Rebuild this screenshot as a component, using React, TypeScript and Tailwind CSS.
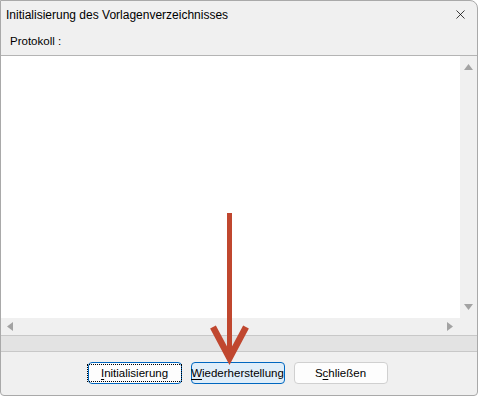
import { X } from "lucide-react";

const font = { fontFamily: '"Segoe UI", "Liberation Sans", Arial, sans-serif' };

function Btn({ u, rest, pre = "", focus = false, hot = false }: { u: string; rest: string; pre?: string; focus?: boolean; hot?: boolean }) {
  return (
    <button
      className={
        "h-[22px] w-[94px] rounded-[4px] border text-[11.5px] text-black flex items-center justify-center " +
        (hot ? "border-[#0067c0] bg-[#e0eef9]" : focus ? "border-[#0067c0] bg-[#fdfdfd]" : "border-[#d0d0d0] bg-[#fdfdfd]")
      }
    >
      <span className={focus ? "outline outline-1 outline-dotted outline-black px-[13px] leading-[16px]" : "leading-[16px]"}>
        {pre}
        <span className="underline underline-offset-2">{u}</span>
        {rest}
      </span>
    </button>
  );
}

export default function App() {
  return (
    <div className="w-[479px] h-[397px] bg-white relative" style={font}>
      <div className="w-[478px] h-[396px] bg-[#f0f0f0] border border-[#a9a9a9] rounded-tr-[8px] rounded-b-[4px] flex flex-col overflow-hidden">
        {/* Title */}
        <div className="h-[27px] flex items-center pl-[5px] pr-[9px] justify-between">
          <span className="text-[12px] text-black">Initialisierung des Vorlagenverzeichnisses</span>
          <X className="w-[15px] h-[15px] text-black" strokeWidth={1.2} />
        </div>
        {/* Label */}
        <div className="h-[27px] flex items-center pl-[9px] text-[11.5px] text-black">Protokoll :</div>
        {/* Log box */}
        <div className="flex-1 flex flex-col bg-white border-t border-[#b4b4b4]">
          <div className="flex-1 flex">
            <div className="flex-1 bg-white" />
            <div className="w-[17px] bg-[#f0f0f0] flex flex-col items-center justify-between py-[8px]">
              <svg width="9" height="6" viewBox="0 0 9 6"><path d="M4.5 0L9 6H0z" fill="#a3a3a3" /></svg>
              <svg width="9" height="6" viewBox="0 0 9 6"><path d="M0 0H9L4.5 6z" fill="#a3a3a3" /></svg>
            </div>
          </div>
          <div className="h-[17px] bg-[#f0f0f0] flex items-center justify-between pl-[6px] pr-[24px]">
            <svg width="6" height="9" viewBox="0 0 6 9"><path d="M6 0V9L0 4.5z" fill="#a3a3a3" /></svg>
            <svg width="6" height="9" viewBox="0 0 6 9"><path d="M0 0V9L6 4.5z" fill="#a3a3a3" /></svg>
          </div>
        </div>
        {/* Status strip */}
        <div className="h-[17px] bg-[#e3e3e3] border-y border-[#c8c8c8]" />
        {/* Buttons */}
        <div className="h-[43px] flex items-center justify-center gap-[9px] pb-[2px] pr-[3px]">
          <Btn u="I" rest="nitialisierung" focus />
          <Btn u="W" rest="iederherstellung" hot />
          <Btn pre="S" u="c" rest="hließen" />
        </div>
      </div>
      {/* Annotation arrow */}
      <svg className="absolute left-0 top-0 pointer-events-none" width="479" height="397" viewBox="0 0 479 397">
        <line x1="229.5" y1="213" x2="229.5" y2="355" stroke="#c0472f" strokeWidth="5" />
        <polyline points="213,327 229.5,358 246,327" fill="none" stroke="#c0472f" strokeWidth="6.5" strokeLinejoin="miter" />
      </svg>
    </div>
  );
}
